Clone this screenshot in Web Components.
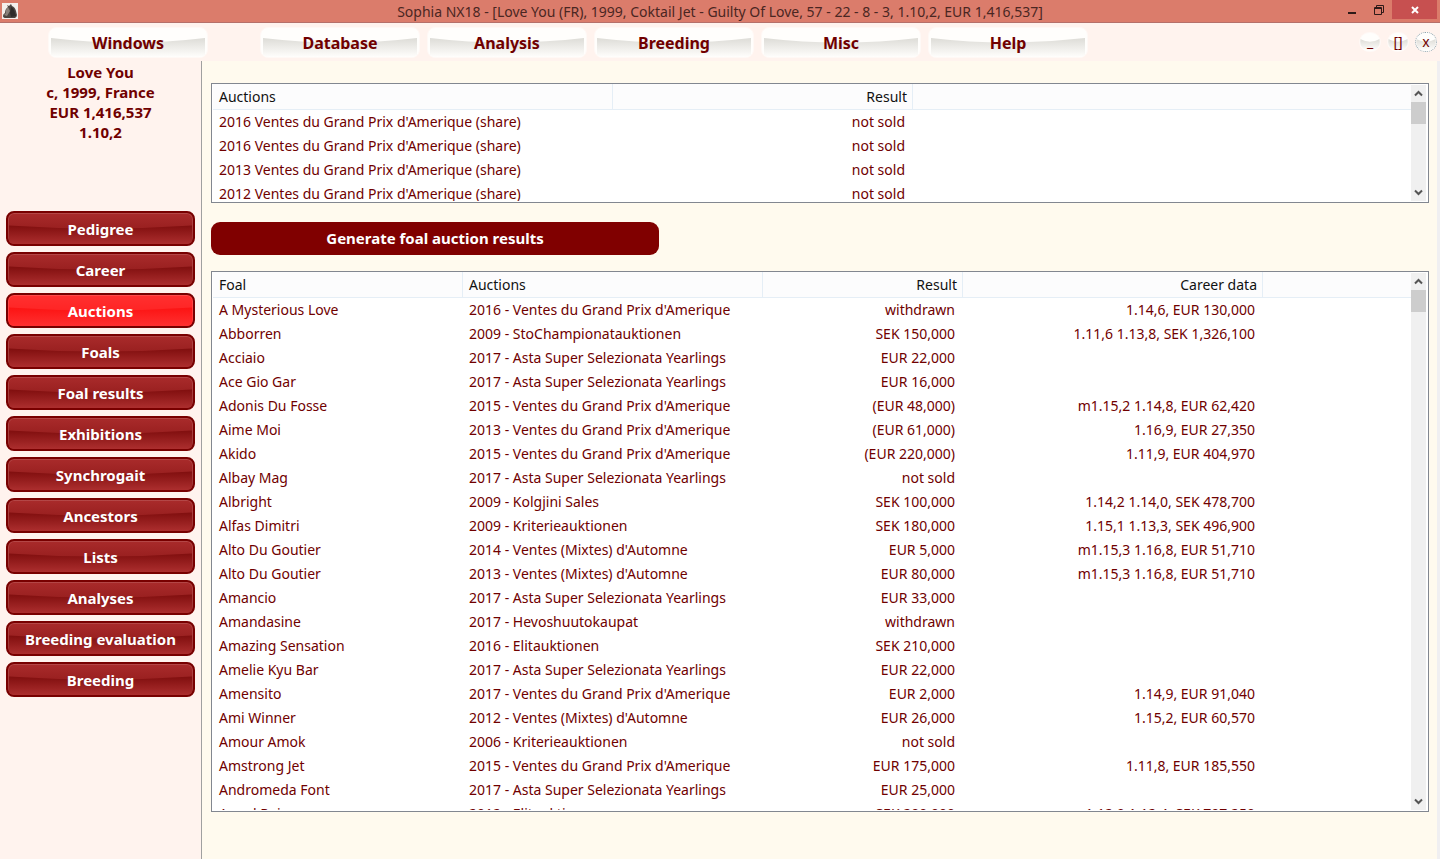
<!DOCTYPE html>
<html lang="en">
<head>
<meta charset="utf-8">
<title>Sophia NX18</title>
<style>
    body {
        margin: 0;
        font-family: "Noto Sans", "Open Sans", sans-serif;
        font-size: 14px;
        color: #700000;
    }
</style>
</head>
<body>
<sophia-window>
    <title-bar slot="title">Sophia NX18 - [Love You (FR), 1999, Coktail Jet - Guilty Of Love, 57 - 22 - 8 - 3, 1.10,2, EUR 1,416,537]</title-bar>

    <menu-strip slot="menu">
        <menu-button slot="first">Windows</menu-button>
        <menu-button>Database</menu-button>
        <menu-button>Analysis</menu-button>
        <menu-button>Breeding</menu-button>
        <menu-button>Misc</menu-button>
        <menu-button>Help</menu-button>
        <menu-button slot="controls" round>_</menu-button>
        <menu-button slot="controls" round>[]</menu-button>
        <menu-button slot="controls" round focused>x</menu-button>
    </menu-strip>

    <horse-card slot="side">
        <div>Love You</div>
        <div>c, 1999, France</div>
        <div>EUR 1,416,537</div>
        <div>1.10,2</div>
    </horse-card>
    <side-button slot="side">Pedigree</side-button>
    <side-button slot="side">Career</side-button>
    <side-button slot="side" active>Auctions</side-button>
    <side-button slot="side">Foals</side-button>
    <side-button slot="side">Foal results</side-button>
    <side-button slot="side">Exhibitions</side-button>
    <side-button slot="side">Synchrogait</side-button>
    <side-button slot="side">Ancestors</side-button>
    <side-button slot="side">Lists</side-button>
    <side-button slot="side">Analyses</side-button>
    <side-button slot="side">Breeding evaluation</side-button>
    <side-button slot="side">Breeding</side-button>

    <list-view id="auctions"></list-view>
    <action-button>Generate foal auction results</action-button>
    <list-view id="foals" fill></list-view>
</sophia-window>

<script>
const html = String.raw;

class BaseElement extends HTMLElement {
    constructor() {
        super();
        this.attachShadow({ mode: 'open' });
    }

    connectedCallback() {
        this.shadowRoot.innerHTML = this.render();
    }
}

/** Window frame: title, menu, side column and content area. */
class SophiaWindow extends BaseElement {
    render() {
        return html`
            <style>
                :host {
                    display: flex;
                    flex-direction: column;
                    height: 100vh;
                    background: #fff3ee;
                }

                .Body {
                    display: flex;
                    flex: 1;
                    min-height: 0;
                }

                nav {
                    display: flex;
                    flex-direction: column;
                    gap: 6px;
                    width: 189px;
                    padding: 0 6px;
                    border-right: 1px solid #a0a0a0;
                }

                main {
                    display: flex;
                    flex: 1;
                    flex-direction: column;
                    min-width: 0;
                    padding: 22px 8px 47px 9px;
                    border-right: 3px solid #f0eff1;
                    background: #fffaee;
                }
            </style>
            <slot name="title"></slot>
            <slot name="menu"></slot>
            <div class="Body">
                <nav><slot name="side"></slot></nav>
                <main><slot></slot></main>
            </div>
        `;
    }
}

class TitleBar extends BaseElement {
    render() {
        return html`
            <style>
                :host {
                    display: grid;
                    grid-template-columns: 108px 1fr 108px;
                    height: 22px;
                    border-bottom: 1px solid #b5706a;
                    background: #db7c6b;
                    color: #4a2622;
                    line-height: 24px;
                }

                .Logo {
                    margin: 3px 2px;
                }

                .Text {
                    overflow: hidden;
                    text-align: center;
                    white-space: nowrap;
                }

                .Controls {
                    display: flex;
                    justify-content: flex-end;
                    padding-right: 3px;
                }

                button {
                    display: grid;
                    place-items: center;
                    width: 27px;
                    height: 19px;
                    padding: 0;
                    border: 0;
                    background: none;
                }

                .Close {
                    width: 45px;
                    background: #c75050;
                }
            </style>
            <svg class="Logo" width="16" height="16" viewBox="0 0 16 16" aria-hidden="true">
                <rect width="16" height="16" fill="#f4efec"/>
                <path d="M5 2 7 3l2-2 1 2q3 1 4 5l1 4q0 2-2 3H4q-3 0-3-2 0-2 2-3 0-4 3-6z" fill="#4b4541"/>
                <path d="M6 4Q3 7 4 10l-2 2 3 1 3-5z" fill="#8a817b"/>
                <path d="M9 4q3 1 4 6l1 3-5 1-1-4z" fill="#2f2b29"/>
            </svg>
            <div class="Text"><slot></slot></div>
            <div class="Controls">
                <button aria-label="Minimize">
                    <svg width="12" height="12"><path d="M2 8h8v2H2z" fill="#2e1a18"/></svg>
                </button>
                <button aria-label="Restore">
                    <svg width="12" height="12" fill="none" stroke="#2e1a18">
                        <path d="M1.500 3.500h7v7h-7zM1 4.500h8M3.500 3V1.500h7v7H9"/>
                    </svg>
                </button>
                <button class="Close" aria-label="Close">
                    <svg width="10" height="10"><path d="m2 2 6 6M8 2 2 8" stroke="#fff" stroke-width="2"/></svg>
                </button>
            </div>
        `;
    }
}

class MenuStrip extends BaseElement {
    render() {
        return html`
            <style>
                :host {
                    display: flex;
                    gap: 7px;
                    align-items: center;
                    height: 30px;
                    padding: 4px 3px 4px 48px;
                }

                .First {
                    margin-right: 45px;
                }

                .Controls {
                    display: flex;
                    gap: 6px;
                    margin-left: auto;
                }
            </style>
            <div class="First"><slot name="first"></slot></div>
            <slot></slot>
            <div class="Controls"><slot name="controls"></slot></div>
        `;
    }
}

/**
 * Glossy white button.
 *
 * @attribute {boolean} round - Small circular variant
 * @attribute {boolean} focused - Dotted focus ring
 */
class MenuButton extends BaseElement {
    render() {
        return html`
            <style>
                :host {
                    display: block;
                }

                button {
                    display: grid;
                    width: 160px;
                    height: 31px;
                    padding: 0;
                    overflow: hidden;
                    border: 1px solid #fff9f6;
                    border-radius: 8px;
                    background: #fffefc;
                    color: #700000;
                    font: bold 16px/30px "Noto Sans", sans-serif;
                }

                svg, span {
                    grid-area: 1 / 1;
                }

                svg {
                    width: 100%;
                    height: 100%;
                }

                :host([round]) button {
                    width: 22px;
                    height: 20px;
                    border-radius: 10px;
                    font: 14px/18px "Noto Sans", sans-serif;
                }

                :host([focused]) button {
                    border: 1px dotted #8fa3ad;
                }
            </style>
            <button>
                <svg viewBox="0 0 160 30" preserveAspectRatio="none" aria-hidden="true">
                    <defs>
                        <linearGradient id="gloss" x2="0" y2="1">
                            <stop offset="0" stop-color="#dddcd7"/>
                            <stop offset="1" stop-color="#fffefc"/>
                        </linearGradient>
                    </defs>
                    <path d="M2 10Q80 19 158 10V29H2z" fill="url(#gloss)"/>
                </svg>
                <span><slot></slot></span>
            </button>
        `;
    }
}

class HorseCard extends BaseElement {
    render() {
        return html`
            <style>
                :host {
                    display: block;
                    height: 143px;
                    padding-top: 1px;
                    font-size: 15px;
                    font-weight: bold;
                    line-height: 20px;
                    text-align: center;
                }
            </style>
            <slot></slot>
        `;
    }
}

/**
 * Glossy red navigation button.
 *
 * @attribute {boolean} active - Marks the current page
 */
class SideButton extends BaseElement {
    render() {
        return html`
            <style>
                :host {
                    --SideButton-top: #a92b2b;
                    --SideButton-middle: #8a1515;
                    --SideButton-low: #800e0e;
                    --SideButton-bottom: #ac2e2e;

                    display: block;
                }

                :host([active]) {
                    --SideButton-top: #ff3030;
                    --SideButton-middle: #ff1919;
                    --SideButton-low: #fc1313;
                    --SideButton-bottom: #ff3030;
                }

                button {
                    display: grid;
                    width: 100%;
                    height: 35px;
                    padding: 0;
                    overflow: hidden;
                    border: 2px solid #780000;
                    border-radius: 8px;
                    background: linear-gradient(var(--SideButton-top), var(--SideButton-middle));
                    box-shadow: inset 0 0 0 1px #ffffff22;
                    color: #fff;
                    font: bold 15px/32px "Noto Sans", sans-serif;
                }

                svg, span {
                    grid-area: 1 / 1;
                }

                svg {
                    width: 100%;
                    height: 100%;
                }

                .Low {
                    stop-color: var(--SideButton-low);
                }

                .Bottom {
                    stop-color: var(--SideButton-bottom);
                }
            </style>
            <button>
                <svg viewBox="0 0 185 31" preserveAspectRatio="none" aria-hidden="true">
                    <defs>
                        <linearGradient id="shade" x2="0" y2="1">
                            <stop class="Low" offset="0"/>
                            <stop class="Bottom" offset="1"/>
                        </linearGradient>
                    </defs>
                    <path d="M1 12Q92 18 184 12V30H1z" fill="url(#shade)"/>
                </svg>
                <span><slot></slot></span>
            </button>
        `;
    }
}

class ActionButton extends BaseElement {
    render() {
        return html`
            <style>
                :host {
                    display: block;
                    margin: 19px 0 16px;
                }

                button {
                    width: 448px;
                    height: 33px;
                    padding: 0;
                    border: 0;
                    border-radius: 9px;
                    background: #800000;
                    color: #fff;
                    font: bold 15px/33px "Noto Sans", sans-serif;
                }
            </style>
            <button><slot></slot></button>
        `;
    }
}

class ScrollBar extends BaseElement {
    render() {
        return html`
            <style>
                :host {
                    display: flex;
                    flex-direction: column;
                    width: 15px;
                    margin-top: 1px;
                    background: #f0f0f0;
                }

                button {
                    display: grid;
                    place-items: center;
                    height: 17px;
                    padding: 0;
                    border: 0;
                    background: none;
                }

                path {
                    fill: none;
                    stroke: #555;
                    stroke-width: 2;
                }

                .Track {
                    flex: 1;
                }

                .Thumb {
                    height: 22px;
                    background: #cdcdcd;
                }
            </style>
            <button aria-label="Scroll up"><svg width="9" height="7"><path d="m1 5.500 3.500-3.500L8 5.500"/></svg></button>
            <div class="Track"><div class="Thumb"></div></div>
            <button aria-label="Scroll down"><svg width="9" height="7"><path d="m1 1.500 3.500 3.500L8 1.500"/></svg></button>
        `;
    }
}

/**
 * Table with fixed column widths. Set `columns` and `rows` to fill it.
 *
 * @attribute {boolean} fill - Take the remaining height
 */
class ListView extends BaseElement {
    #columns = [];
    #rows = [];

    set columns(value) {
        this.#columns = value;
        this.connectedCallback();
    }

    set rows(value) {
        this.#rows = value;
        this.connectedCallback();
    }

    render() {
        const cell = (tag, text, i) =>
            `<${tag} class="${this.#columns[i]?.right ? 'Right' : ''}">${text}</${tag}>`;

        return html`
            <style>
                :host {
                    display: flex;
                    box-sizing: border-box;
                    height: 120px;
                    padding: 0 2px 1px 1px;
                    border: 1px solid #828790;
                    background: #fff;
                }

                :host([fill]) {
                    flex: 1;
                    height: auto;
                    min-height: 0;
                }

                .View {
                    flex: 1;
                    min-width: 0;
                    overflow: hidden;
                }

                table {
                    width: 100%;
                    table-layout: fixed;
                    border-collapse: separate;
                    border-spacing: 0;
                    line-height: 24px;
                    white-space: nowrap;
                }

                th, td {
                    height: 24px;
                    padding: 0 8px 0 6px;
                    text-align: left;
                }

                th {
                    padding-top: 1px;
                    padding-right: 5px;
                    border-right: 1px solid #e5eef6;
                    border-bottom: 1px solid #e5eef6;
                    background: #fcfcfd;
                    color: #111;
                    font-weight: normal;
                }

                th:last-child {
                    border-right: 0;
                }

                .Right {
                    text-align: right;
                }
            </style>
            <div class="View">
                <table>
                    <colgroup>${this.#columns.map(c => `<col style="width: ${c.width}px">`).join('')}<col></colgroup>
                    <thead><tr>${this.#columns.map((c, i) => cell('th', c.name, i)).join('')}<th></th></tr></thead>
                    <tbody>${this.#rows.map(r => `<tr>${r.map((t, i) => cell('td', t, i)).join('')}</tr>`).join('')}</tbody>
                </table>
            </div>
            <scroll-bar></scroll-bar>
        `;
    }
}

customElements.define('title-bar', TitleBar);
customElements.define('menu-strip', MenuStrip);
customElements.define('menu-button', MenuButton);
customElements.define('horse-card', HorseCard);
customElements.define('side-button', SideButton);
customElements.define('action-button', ActionButton);
customElements.define('scroll-bar', ScrollBar);
customElements.define('list-view', ListView);
customElements.define('sophia-window', SophiaWindow);

const auctions = document.querySelector('#auctions');
auctions.columns = [
    { name: 'Auctions', width: 400 },
    { name: 'Result', width: 300, right: true },
];
auctions.rows = [
    ["2016 Ventes du Grand Prix d'Amerique (share)", 'not sold'],
    ["2016 Ventes du Grand Prix d'Amerique (share)", 'not sold'],
    ["2013 Ventes du Grand Prix d'Amerique (share)", 'not sold'],
    ["2012 Ventes du Grand Prix d'Amerique (share)", 'not sold'],
];

const foals = document.querySelector('#foals');
foals.columns = [
    { name: 'Foal', width: 250 },
    { name: 'Auctions', width: 300 },
    { name: 'Result', width: 200, right: true },
    { name: 'Career data', width: 300, right: true },
];
foals.rows = [
    ['A Mysterious Love', "2016 - Ventes du Grand Prix d'Amerique", 'withdrawn', '1.14,6, EUR 130,000'],
    ['Abborren', '2009 - StoChampionatauktionen', 'SEK 150,000', '1.11,6 1.13,8, SEK 1,326,100'],
    ['Acciaio', '2017 - Asta Super Selezionata Yearlings', 'EUR 22,000', ''],
    ['Ace Gio Gar', '2017 - Asta Super Selezionata Yearlings', 'EUR 16,000', ''],
    ['Adonis Du Fosse', "2015 - Ventes du Grand Prix d'Amerique", '(EUR 48,000)', 'm1.15,2 1.14,8, EUR 62,420'],
    ['Aime Moi', "2013 - Ventes du Grand Prix d'Amerique", '(EUR 61,000)', '1.16,9, EUR 27,350'],
    ['Akido', "2015 - Ventes du Grand Prix d'Amerique", '(EUR 220,000)', '1.11,9, EUR 404,970'],
    ['Albay Mag', '2017 - Asta Super Selezionata Yearlings', 'not sold', ''],
    ['Albright', '2009 - Kolgjini Sales', 'SEK 100,000', '1.14,2 1.14,0, SEK 478,700'],
    ['Alfas Dimitri', '2009 - Kriterieauktionen', 'SEK 180,000', '1.15,1 1.13,3, SEK 496,900'],
    ['Alto Du Goutier', "2014 - Ventes (Mixtes) d'Automne", 'EUR 5,000', 'm1.15,3 1.16,8, EUR 51,710'],
    ['Alto Du Goutier', "2013 - Ventes (Mixtes) d'Automne", 'EUR 80,000', 'm1.15,3 1.16,8, EUR 51,710'],
    ['Amancio', '2017 - Asta Super Selezionata Yearlings', 'EUR 33,000', ''],
    ['Amandasine', '2017 - Hevoshuutokaupat', 'withdrawn', ''],
    ['Amazing Sensation', '2016 - Elitauktionen', 'SEK 210,000', ''],
    ['Amelie Kyu Bar', '2017 - Asta Super Selezionata Yearlings', 'EUR 22,000', ''],
    ['Amensito', "2017 - Ventes du Grand Prix d'Amerique", 'EUR 2,000', '1.14,9, EUR 91,040'],
    ['Ami Winner', "2012 - Ventes (Mixtes) d'Automne", 'EUR 26,000', '1.15,2, EUR 60,570'],
    ['Amour Amok', '2006 - Kriterieauktionen', 'not sold', ''],
    ['Amstrong Jet', "2015 - Ventes du Grand Prix d'Amerique", 'EUR 175,000', '1.11,8, EUR 185,550'],
    ['Andromeda Font', '2017 - Asta Super Selezionata Yearlings', 'EUR 25,000', ''],
    ['Angel Rain', '2012 - Elitauktionen', 'SEK 200,000', '1.12,9 1.12,4, SEK 797,250'],
];
</script>
</body>
</html>
